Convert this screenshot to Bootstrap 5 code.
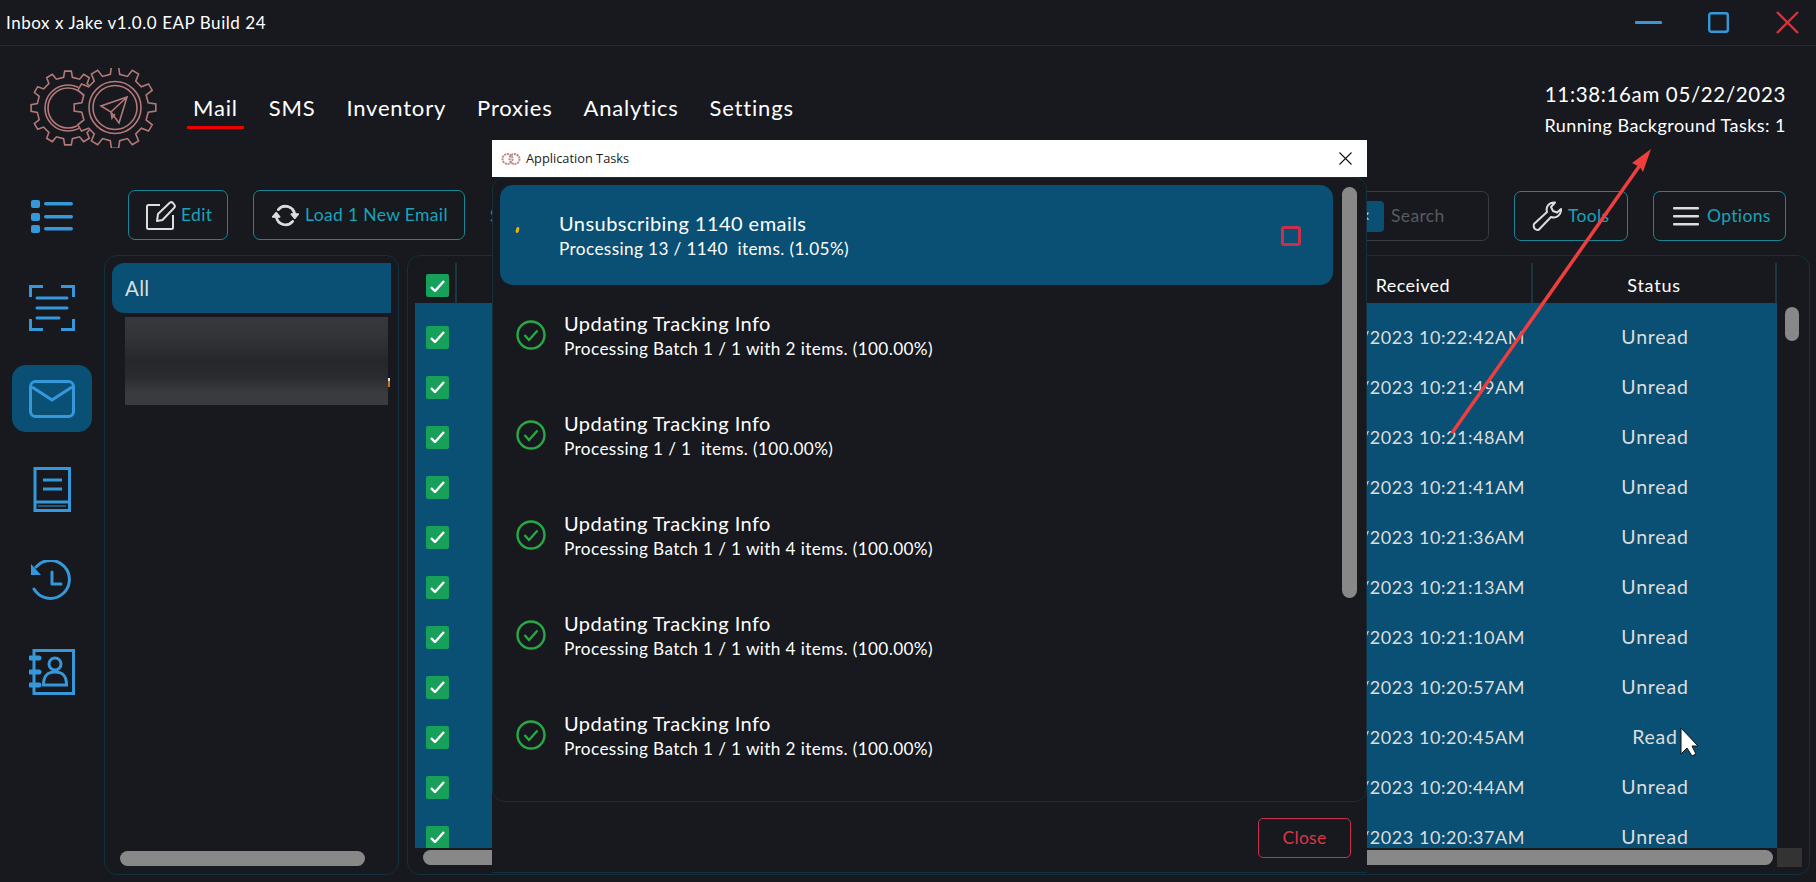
<!DOCTYPE html>
<html lang="en"><head><meta charset="utf-8"><title>Inbox x Jake</title>
<link href="https://cdn.jsdelivr.net/npm/bootstrap@5.3.0/dist/css/bootstrap.min.css" rel="stylesheet">
<style>
:root{--ink:#17191e;--blue:#0a5074;--line:#12303d;--ico:#3498db;--teal:#1aa3ba}
html,body{height:100%}
body{background:var(--ink);color:#fff;font-family:"Lato","Noto Sans",sans-serif;width:1816px;height:882px;overflow:hidden;position:relative}
svg{display:block}
.tbar{height:46px;border-bottom:1px solid var(--line);padding:0 17px 0 6px;font-size:17px;letter-spacing:.55px}
.tbar .mn{margin-right:46px}.tbar .mx{margin-right:47px}
.hdr{height:144px;padding:22px 30px 42px 30px}
.logo-s{margin-right:29px}
.nav-x .nav-link{color:#fff;font-size:22px;padding:4px 6px 3px;margin-right:19px;letter-spacing:.8px;border-bottom:3px solid transparent;line-height:31px}
.nav-x .nav-link.on{border-bottom-color:#e00}
.clock{font-size:20.5px;line-height:26px;letter-spacing:.65px;margin-top:1px}
.bg-tasks{font-size:18px;line-height:22px;margin-top:7px;letter-spacing:.45px}
.side{width:104px}
.side-i{width:80px;height:67px;margin-left:12px;margin-bottom:24px;border-radius:14px;color:var(--ico)}
.side-i.on{background:var(--blue)}
.side-col{margin-top:-7px}
.tools{height:51px;margin-bottom:14px;padding:0 30px 0 24px;gap:25px}
.btn-t{height:50px;border:1.5px solid #1b8598;border-radius:7px;color:var(--teal);font-size:17.5px;display:inline-flex;align-items:center;padding:0;background:transparent;letter-spacing:.35px}
.btn-t:hover{color:var(--teal)}
.w-edit{width:100px;padding-left:17px;gap:5px}
.w-load{width:212px;padding-left:18px;gap:6px}
.w-tools{width:114px;padding-left:17px;gap:6px;margin-top:1px}
.w-opt{width:133px;padding-left:19px;gap:8px;margin-top:1px}
.peek{color:#1a9bb0;font-size:17px;margin-top:13px}
.srch{width:189px;height:50px;margin-top:1px;border:1.5px solid #3a3c40;border-radius:7px;padding-left:53px;color:#5a5b5e;font-size:17.5px;gap:7px;letter-spacing:.35px}
.chip{width:30px;height:31px;background:var(--blue);border-radius:0 4px 4px 0;color:#ddd;font-size:17px;line-height:30px;overflow:hidden;text-align:left;padding-left:6px}
.panes{gap:8px;padding-right:6px}
.pane{height:620px;border:1px solid var(--line);border-radius:13px;padding:7px}
.p-list{width:295px}
.p-grid{flex:1;min-width:0;display:grid;grid-template-columns:1fr 25px;grid-template-rows:40px 545px 19px;padding-right:7px}
.all{height:50px;background:var(--blue);border-radius:12px 0 0 12px;font-size:20.5px;color:#ddd;padding-left:13px;line-height:50px;letter-spacing:.3px}
.blurred{margin:4px 3px 0 13px;height:88px;position:relative;background:linear-gradient(180deg,#37383c 0,#333438 22%,#26272b 50%,#2a2b2f 68%,#3b3c40 88%,#3a3b3f 100%)}
.blurred::after{content:"";position:absolute;right:-2px;top:61px;width:2px;height:9px;background:linear-gradient(#ddd 30%,#c9781e 30%)}
.hs{height:15px;background:#888;border-radius:8px}
.hs-a{margin:auto 26px 1px 8px}
.th,.tr{display:flex;align-items:center}
.th{color:#fff;font-size:18px;letter-spacing:.4px}
.c1{width:42px;padding-left:11px;flex:none}
.c2{flex:1;text-align:right;padding-right:8px;min-width:0}
.c3{width:244px;flex:none;text-align:center}
.th>div{height:40px;line-height:44px;border-right:2px solid #1c3540}
.th .c2{padding-right:81px}
.th .c3{font-size:18px;letter-spacing:.75px}
.tbody{background:var(--blue);padding-top:9px;overflow:hidden;color:#ddd;font-size:18px;letter-spacing:.55px}
.tbody .c3{font-size:19.5px;letter-spacing:.8px}
.tr{height:50px}
.tick{width:23px;height:23px;background:#16a05a;border-radius:2px;display:flex;align-items:center;justify-content:center}
.thumb-v{width:14px;height:34px;border-radius:7px;background:#888;margin:4px 0 0 8px}
.hs-b{margin:2px 4px 0 8px}
.corner{background:#333;height:19px}
.dlg{position:absolute;left:492px;top:140px;width:875px;height:733px;background:var(--ink);border-bottom:1px solid var(--line)}
.dlg-top{height:37px;background:#fff;color:#222;font-family:"Open Sans",sans-serif;font-size:12.8px;padding:0 15px 0 9px;gap:5px}
.dlg-body{height:625px;border:1px solid var(--line);border-radius:12px;position:relative;padding:7px 0 0 7px;overflow:hidden;background:var(--ink)}
.job{height:100px;width:833px;padding:2px 0 0 16px;font-size:20px;letter-spacing:.45px}
.job.on{background:var(--blue);border-radius:13px;padding-left:59px;position:relative}
.job .s1{line-height:26px}
.job .s2{font-size:17.2px;line-height:26px;letter-spacing:.38px}
.job .ck{margin-right:18px;margin-top:-2px}
.dot{position:absolute;left:16px;top:42px;width:3px;height:6px;background:#f0b400;border-radius:2px;transform:rotate(15deg)}
.stop{width:20px;height:20px;border:3px solid #c9304c;border-radius:3px;margin-left:auto;margin-right:32px}
.dthumb{position:absolute;left:849px;top:9px;width:15px;height:411px;background:#888;border-radius:8px}
.dlg-foot{padding:16px 16px 0 0}
.btn-c{width:93px;height:40px;border:1.5px solid #c9304c;border-radius:5px;color:#dc3545;font-size:17.5px;padding:0;background:transparent;letter-spacing:.3px}
.over{position:absolute;left:0;top:0;pointer-events:none}
</style></head>
<body>
<svg width="0" height="0" class="position-absolute"><defs>
<g id="logo" fill="none" stroke="#b47878" stroke-width="1.6">
<mask id="mk" maskUnits="userSpaceOnUse" x="0" y="0" width="200" height="200"><rect width="200" height="200" fill="#fff"/><path class="g2" fill="#000" stroke="#000"/></mask>
<g mask="url(#mk)"><path class="g1"/><circle cx="68" cy="108" r="20"/><circle cx="68" cy="108" r="23"/></g>
<path class="g2"/><circle cx="115" cy="107.500" r="22"/><circle cx="115" cy="107.500" r="26"/>
<path d="M127 97 101 106 111 112 119 123Z M127 97 111 112 112 118 115 114"/>
</g></defs></svg>

<div class="tbar d-flex align-items-center">
<span>Inbox x Jake v1.0.0 EAP Build 24</span>
<svg class="ms-auto mn" width="27" height="4"><rect width="27" height="3" y="0" fill="#3498db" rx="1"/></svg>
<svg class="mx" width="21" height="21"><rect x="1.200" y="1.200" width="18.600" height="18.600" rx="2" fill="none" stroke="#3498db" stroke-width="2.400"/></svg>
<svg width="23" height="23"><path d="M1 1 22 22M22 1 1 22" stroke="#c8383f" stroke-width="2.400"/></svg>
</div>

<div class="hdr d-flex align-items-center">
<svg class="logo-s" width="128" height="80" viewBox="30 68 128 80"><use href="#logo"/></svg>
<nav class="nav nav-x">
<a class="nav-link on" href="#">Mail</a><a class="nav-link" href="#">SMS</a><a class="nav-link" href="#">Inventory</a><a class="nav-link" href="#">Proxies</a><a class="nav-link" href="#">Analytics</a><a class="nav-link" href="#">Settings</a>
</nav>
<div class="ms-auto text-end">
<div class="clock">11:38:16am 05/22/2023</div>
<div class="bg-tasks">Running Background Tasks: 1</div>
</div>
</div>

<div class="d-flex">
<div class="side">
<div class="side-col">
<div class="side-i d-flex align-items-center justify-content-center"><svg width="42" height="33" viewBox="0 0 42 33" fill="currentColor"><rect width="9" height="8" y="0" rx="2"/><rect width="9" height="8" y="13" rx="2"/><rect width="9" height="8" y="25" rx="2"/><rect x="13" y="2" width="29" height="3.500" rx="1.700"/><rect x="13" y="15" width="29" height="3.500" rx="1.700"/><rect x="13" y="27" width="29" height="3.500" rx="1.700"/></svg></div>
<div class="side-i d-flex align-items-center justify-content-center"><svg width="46" height="46" viewBox="0 0 46 46" fill="none" stroke="currentColor" stroke-width="3"><path d="M14 1.500H1.500V12M32 1.500H44.500V12M14 44.500H1.500V34M32 44.500H44.500V34" /><path d="M8 13H38M8 23H38M8 33H30" stroke-linecap="round"/></svg></div>
<div class="side-i on d-flex align-items-center justify-content-center"><svg width="46" height="38" viewBox="0 0 46 38" fill="none" stroke="currentColor" stroke-width="3"><rect x="1.500" y="1.500" width="43" height="35" rx="5"/><path d="M3 7 23 20 43 7" stroke-linejoin="round"/></svg></div>
<div class="side-i d-flex align-items-center justify-content-center"><svg width="38" height="45" viewBox="0 0 38 45" fill="none" stroke="currentColor" stroke-width="3"><path d="M2 43.500H36.500V1.500H2Z M2 35H36.500"/><path d="M10 13H29M10 22H29"/><path d="M5 39H33" stroke-width="1"/></svg></div>
<div class="side-i d-flex align-items-center justify-content-center"><svg width="42" height="42" viewBox="0 0 42 42" fill="none" stroke="currentColor" stroke-width="3"><path d="M5 7A19 19 0 1 1 3 29" stroke-linecap="round"/><path d="M0 4 10 15 0 15Z" fill="currentColor" stroke="none"/><path d="M21 12V24H30" stroke-linecap="round" stroke-linejoin="round"/></svg></div>
<div class="side-i d-flex align-items-center justify-content-center"><svg width="46" height="46" viewBox="0 0 46 46" fill="none" stroke="currentColor" stroke-width="3"><path d="M5 1.500H44.500V44.500H5Z"/><circle cx="26" cy="15" r="6"/><path d="M14.500 36C14.500 26 19 23 26 23S37.500 26 37.500 36Z"/><path d="M1 9H10M1 23H10M1 36H10" stroke-width="5" stroke-linecap="round"/></svg></div>
</div>
</div>
<div class="flex-grow-1" style="min-width:0">
<div class="tools d-flex align-items-start">
<button class="btn btn-t w-edit"><svg width="30" height="29" viewBox="0 0 30 29" fill="none" stroke="#ddd" stroke-width="2"><path d="M14 4H2.500Q1 4 1 5.500V26.500Q1 28 2.500 28H25.500Q27 28 27 26.500V14" /><path d="M11 20 12 13 24 1.500Q25.500 .5 27 2L28.500 4Q29.500 5.500 28 7L16.500 19Z" stroke-linejoin="round"/></svg>Edit</button>
<button class="btn btn-t w-load"><svg width="27" height="27" viewBox="0 0 16 16" fill="#ddd" stroke="#ddd" stroke-width=".6"><path d="M11.534 7h3.932a.25.25 0 0 1 .192.41l-1.966 2.36a.25.25 0 0 1-.384 0l-1.966-2.36a.25.25 0 0 1 .192-.41zm-11 2h3.932a.25.25 0 0 0 .192-.41L2.692 6.230a.25.25 0 0 0-.384 0L.342 8.590A.25.25 0 0 0 .534 9z"/><path d="M8 3c-1.552 0-2.940.707-3.857 1.818a.5.5 0 1 1-.771-.636A6.002 6.002 0 0 1 13.917 7H12.900A5.002 5.002 0 0 0 8 3zM3.100 9a5.002 5.002 0 0 0 8.757 2.182.5.5 0 1 1 .771.636A6.002 6.002 0 0 1 2.083 9H3.100z"/></svg>Load 1 New Email</button>
<span class="peek">Select</span>
<div class="ms-auto srch d-flex align-items-center"><div class="chip">×</div>Search</div>
<button class="btn btn-t w-tools"><svg width="30" height="30" viewBox="0 0 30 30" fill="none" stroke="#ddd" stroke-width="2" stroke-linejoin="round"><path d="M2 23 15 11C13.500 6 17 1 23 1.500L19 6 21 10 25 11.500 29 8C29.500 14 24 18 19 16L7 28.500Q5 29.500 3 28 1 26 2 23Z"/></svg>Tools</button>
<button class="btn btn-t w-opt"><svg width="26" height="19" viewBox="0 0 26 19" fill="#ddd"><rect width="26" height="2.500" y="0" rx="1"/><rect width="26" height="2.500" y="8" rx="1"/><rect width="26" height="2.500" y="16" rx="1"/></svg>Options</button>
</div>
<div class="panes d-flex">
<div class="pane p-list d-flex flex-column">
<div class="all">All</div>
<div class="blurred"></div>
<div class="hs hs-a"></div>
</div>
<div class="pane p-grid">
<div class="th"><div class="c1"><div class="tick" style="margin-top:11px"><svg width="15" height="12" viewBox="0 0 15 12" fill="none" stroke="#fff" stroke-width="2.400"><path d="M1 7 5 11 14 1"/></svg></div></div><div class="c2">Received</div><div class="c3">Status</div></div>
<div></div>
<div class="tbody">
<div class="tr"><div class="c1"><div class="tick"><svg width="15" height="12" viewBox="0 0 15 12" fill="none" stroke="#fff" stroke-width="2.400"><path d="M1 7 5 11 14 1"/></svg></div></div><div class="c2">05/22/2023 10:22:42AM</div><div class="c3">Unread</div></div>
<div class="tr"><div class="c1"><div class="tick"><svg width="15" height="12" viewBox="0 0 15 12" fill="none" stroke="#fff" stroke-width="2.400"><path d="M1 7 5 11 14 1"/></svg></div></div><div class="c2">05/22/2023 10:21:49AM</div><div class="c3">Unread</div></div>
<div class="tr"><div class="c1"><div class="tick"><svg width="15" height="12" viewBox="0 0 15 12" fill="none" stroke="#fff" stroke-width="2.400"><path d="M1 7 5 11 14 1"/></svg></div></div><div class="c2">05/22/2023 10:21:48AM</div><div class="c3">Unread</div></div>
<div class="tr"><div class="c1"><div class="tick"><svg width="15" height="12" viewBox="0 0 15 12" fill="none" stroke="#fff" stroke-width="2.400"><path d="M1 7 5 11 14 1"/></svg></div></div><div class="c2">05/22/2023 10:21:41AM</div><div class="c3">Unread</div></div>
<div class="tr"><div class="c1"><div class="tick"><svg width="15" height="12" viewBox="0 0 15 12" fill="none" stroke="#fff" stroke-width="2.400"><path d="M1 7 5 11 14 1"/></svg></div></div><div class="c2">05/22/2023 10:21:36AM</div><div class="c3">Unread</div></div>
<div class="tr"><div class="c1"><div class="tick"><svg width="15" height="12" viewBox="0 0 15 12" fill="none" stroke="#fff" stroke-width="2.400"><path d="M1 7 5 11 14 1"/></svg></div></div><div class="c2">05/22/2023 10:21:13AM</div><div class="c3">Unread</div></div>
<div class="tr"><div class="c1"><div class="tick"><svg width="15" height="12" viewBox="0 0 15 12" fill="none" stroke="#fff" stroke-width="2.400"><path d="M1 7 5 11 14 1"/></svg></div></div><div class="c2">05/22/2023 10:21:10AM</div><div class="c3">Unread</div></div>
<div class="tr"><div class="c1"><div class="tick"><svg width="15" height="12" viewBox="0 0 15 12" fill="none" stroke="#fff" stroke-width="2.400"><path d="M1 7 5 11 14 1"/></svg></div></div><div class="c2">05/22/2023 10:20:57AM</div><div class="c3">Unread</div></div>
<div class="tr"><div class="c1"><div class="tick"><svg width="15" height="12" viewBox="0 0 15 12" fill="none" stroke="#fff" stroke-width="2.400"><path d="M1 7 5 11 14 1"/></svg></div></div><div class="c2">05/22/2023 10:20:45AM</div><div class="c3">Read</div></div>
<div class="tr"><div class="c1"><div class="tick"><svg width="15" height="12" viewBox="0 0 15 12" fill="none" stroke="#fff" stroke-width="2.400"><path d="M1 7 5 11 14 1"/></svg></div></div><div class="c2">05/22/2023 10:20:44AM</div><div class="c3">Unread</div></div>
<div class="tr"><div class="c1"><div class="tick"><svg width="15" height="12" viewBox="0 0 15 12" fill="none" stroke="#fff" stroke-width="2.400"><path d="M1 7 5 11 14 1"/></svg></div></div><div class="c2">05/22/2023 10:20:37AM</div><div class="c3">Unread</div></div>
</div>
<div><div class="thumb-v"></div></div>
<div class="hs hs-b"></div>
<div class="corner"></div>
</div>
</div>
</div>
</div>

<div class="dlg">
<div class="dlg-top d-flex align-items-center">
<svg width="20" height="14" viewBox="0 0 20 14" fill="none" stroke="#b88" stroke-width="2" stroke-dasharray="2 .8"><circle cx="6.500" cy="7" r="5"/><circle cx="13.500" cy="7" r="5"/></svg>
<span>Application Tasks</span>
<svg class="ms-auto" width="13" height="13"><path d="M.5.5 12.500 12.500M12.500.5.5 12.500" stroke="#111" stroke-width="1.100"/></svg>
</div>
<div class="dlg-body">
<div class="dthumb"></div>
<div class="job on d-flex align-items-center"><span class="dot"></span><div><div class="s1">Unsubscribing 1140 emails</div><div class="s2">Processing 13 / 1140 &nbsp;items. (1.05%)</div></div><div class="stop"></div></div>
<div class="job d-flex align-items-center"><svg class="ck" width="30" height="30" viewBox="0 0 30 30" fill="none" stroke="#28a745" stroke-width="2.400"><circle cx="15" cy="15" r="13.500"/><path d="M8.500 15 13 20 21.500 10.500"/></svg><div><div class="s1">Updating Tracking Info</div><div class="s2">Processing Batch 1 / 1 with 2 items. (100.00%)</div></div></div>
<div class="job d-flex align-items-center"><svg class="ck" width="30" height="30" viewBox="0 0 30 30" fill="none" stroke="#28a745" stroke-width="2.400"><circle cx="15" cy="15" r="13.500"/><path d="M8.500 15 13 20 21.500 10.500"/></svg><div><div class="s1">Updating Tracking Info</div><div class="s2">Processing 1 / 1 &nbsp;items. (100.00%)</div></div></div>
<div class="job d-flex align-items-center"><svg class="ck" width="30" height="30" viewBox="0 0 30 30" fill="none" stroke="#28a745" stroke-width="2.400"><circle cx="15" cy="15" r="13.500"/><path d="M8.500 15 13 20 21.500 10.500"/></svg><div><div class="s1">Updating Tracking Info</div><div class="s2">Processing Batch 1 / 1 with 4 items. (100.00%)</div></div></div>
<div class="job d-flex align-items-center"><svg class="ck" width="30" height="30" viewBox="0 0 30 30" fill="none" stroke="#28a745" stroke-width="2.400"><circle cx="15" cy="15" r="13.500"/><path d="M8.500 15 13 20 21.500 10.500"/></svg><div><div class="s1">Updating Tracking Info</div><div class="s2">Processing Batch 1 / 1 with 4 items. (100.00%)</div></div></div>
<div class="job d-flex align-items-center"><svg class="ck" width="30" height="30" viewBox="0 0 30 30" fill="none" stroke="#28a745" stroke-width="2.400"><circle cx="15" cy="15" r="13.500"/><path d="M8.500 15 13 20 21.500 10.500"/></svg><div><div class="s1">Updating Tracking Info</div><div class="s2">Processing Batch 1 / 1 with 2 items. (100.00%)</div></div></div>
</div>
<div class="dlg-foot d-flex justify-content-end"><button class="btn btn-c">Close</button></div>
</div>

<svg class="over" width="1816" height="882">
<path d="M1452 433 1645 158" stroke="#ef3e3e" stroke-width="3.500"/>
<path d="M1651 149 1632 163 1640 167 1643 172Z" fill="#ef3e3e"/>
<path d="M1681 728V754L1687 748 1692 756 1696 754 1692 746H1698Z" fill="#fff" stroke="#111" stroke-width="1"/>
</svg>
<script>
function gear(cx,cy,ro,ri,n){var d='',st=2*Math.PI/n;for(var i=0;i<n;i++){var a=i*st-Math.PI/2;var pts=[[ri,a-st*.27],[ro,a-st*.17],[ro,a+st*.17],[ri,a+st*.27]];pts.forEach(function(p,j){d+=(i==0&&j==0?'M':'L')+(cx+p[0]*Math.cos(p[1])).toFixed(1)+' '+(cy+p[0]*Math.sin(p[1])).toFixed(1)+' '});}return d+'Z'}
document.querySelectorAll('.g1').forEach(function(e){e.setAttribute('d',gear(68,108,37,31,12))});
document.querySelectorAll('.g2').forEach(function(e){e.setAttribute('d',gear(115,107.5,41,33.5,12))});
</script>
</body></html>
